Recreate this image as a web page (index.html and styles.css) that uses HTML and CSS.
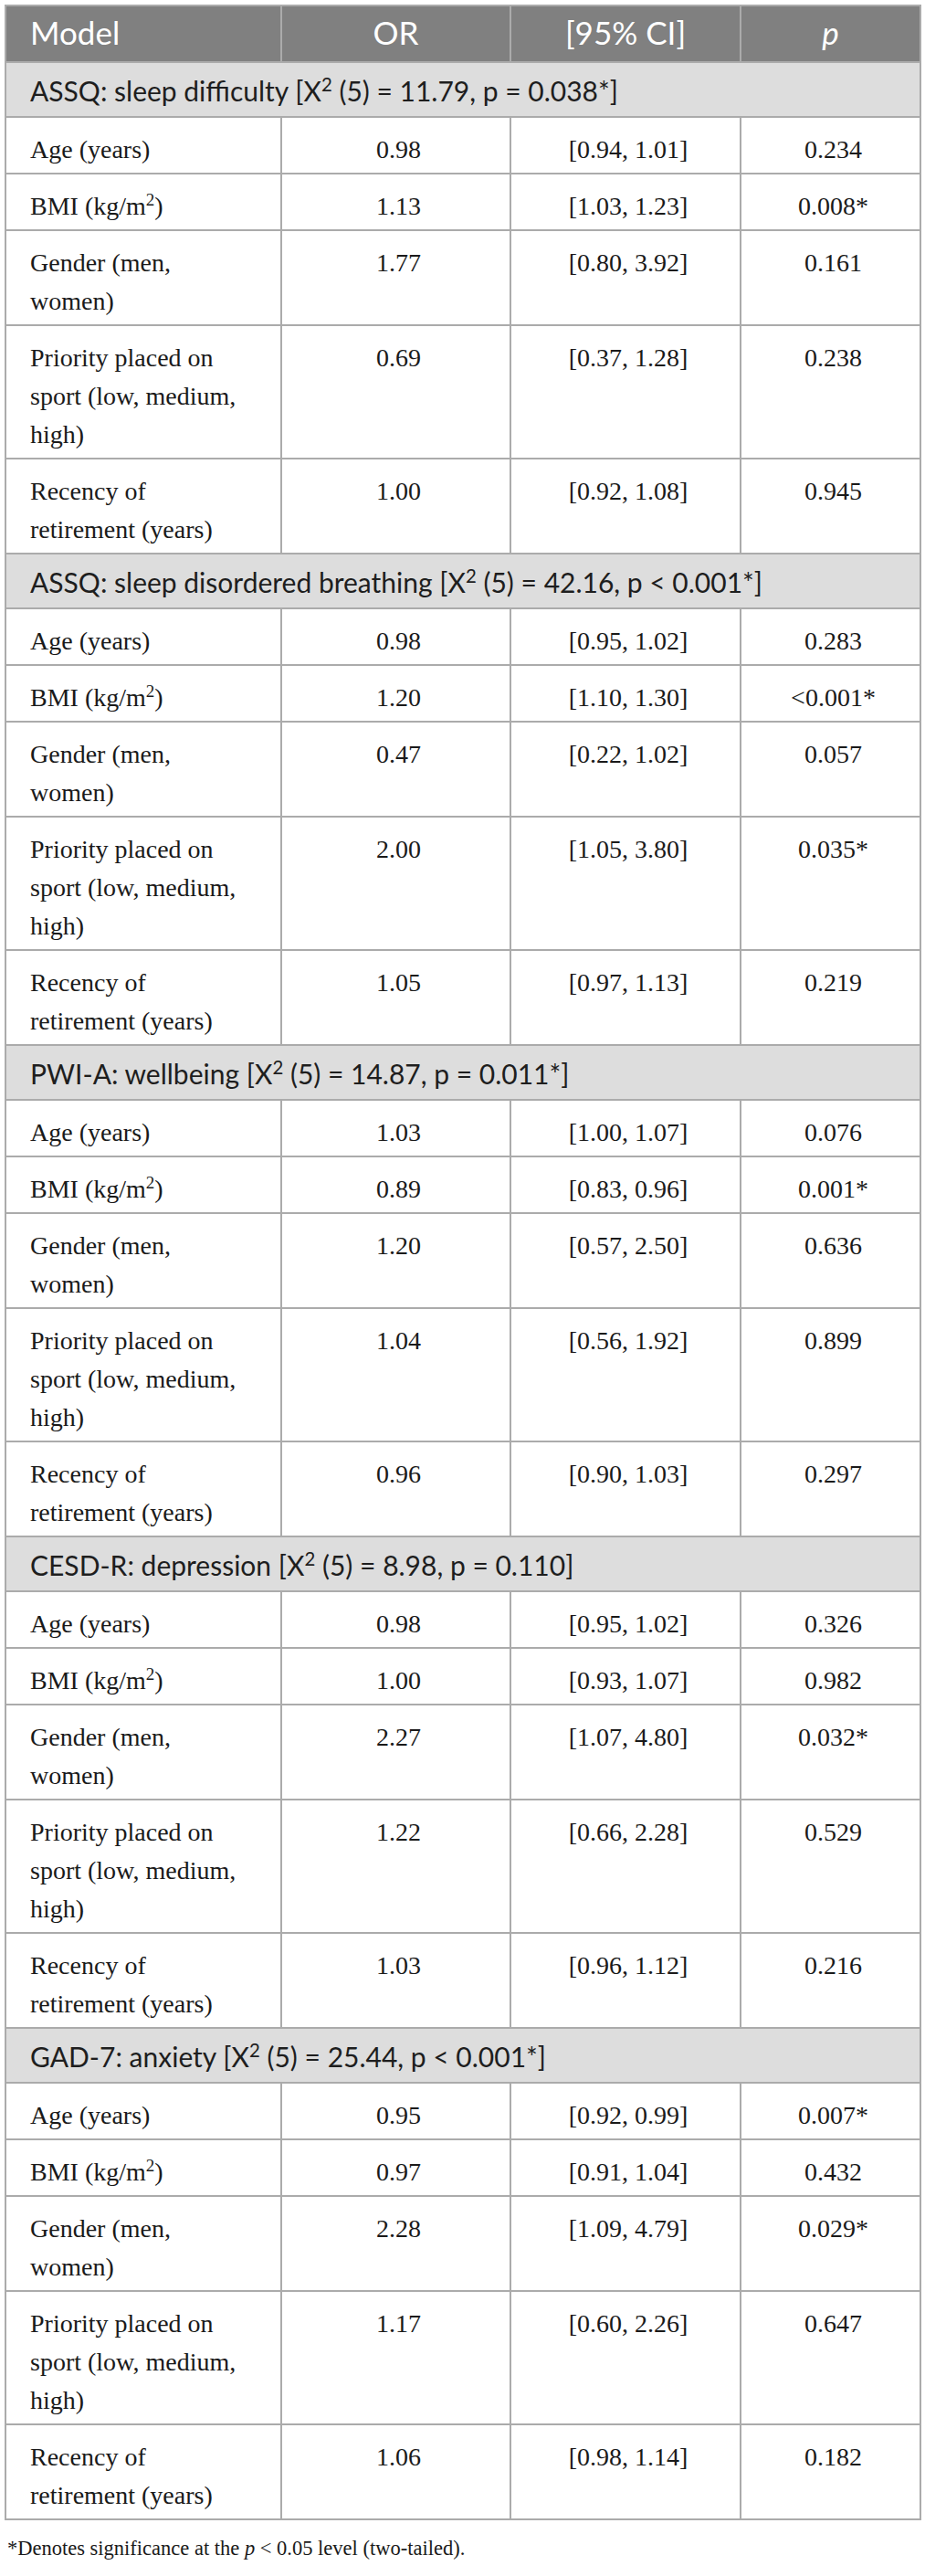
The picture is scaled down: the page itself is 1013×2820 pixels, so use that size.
FILE: index.html
```html
<!DOCTYPE html>
<html lang="en">
<head>
<meta charset="utf-8">
<title>Logistic regression models</title>
<link rel="stylesheet" href="styles.css">
</head>
<body>
<div class="wrap">
<table class="tbl">
<colgroup>
<col class="c1"><col class="c2"><col class="c3"><col class="c4">
</colgroup>
<thead>
<tr><th class="left">Model</th><th>OR</th><th>[95% CI]</th><th><i>p</i></th></tr>
</thead>
<tbody>
<tr class="sec"><td colspan="4">ASSQ: sleep difficulty [X<sup>2</sup> (5) = 11.79, p = 0.038*]</td></tr>
<tr><td>Age (years)</td><td>0.98</td><td>[0.94, 1.01]</td><td>0.234</td></tr>
<tr><td>BMI (kg/m<sup>2</sup>)</td><td>1.13</td><td>[1.03, 1.23]</td><td>0.008*</td></tr>
<tr><td>Gender (men, women)</td><td>1.77</td><td>[0.80, 3.92]</td><td>0.161</td></tr>
<tr><td>Priority placed on sport (low, medium, high)</td><td>0.69</td><td>[0.37, 1.28]</td><td>0.238</td></tr>
<tr><td>Recency of retirement (years)</td><td>1.00</td><td>[0.92, 1.08]</td><td>0.945</td></tr>

<tr class="sec"><td colspan="4">ASSQ: sleep disordered breathing [X<sup>2</sup> (5) = 42.16, p &lt; 0.001*]</td></tr>
<tr><td>Age (years)</td><td>0.98</td><td>[0.95, 1.02]</td><td>0.283</td></tr>
<tr><td>BMI (kg/m<sup>2</sup>)</td><td>1.20</td><td>[1.10, 1.30]</td><td>&lt;0.001*</td></tr>
<tr><td>Gender (men, women)</td><td>0.47</td><td>[0.22, 1.02]</td><td>0.057</td></tr>
<tr><td>Priority placed on sport (low, medium, high)</td><td>2.00</td><td>[1.05, 3.80]</td><td>0.035*</td></tr>
<tr><td>Recency of retirement (years)</td><td>1.05</td><td>[0.97, 1.13]</td><td>0.219</td></tr>

<tr class="sec"><td colspan="4">PWI-A: wellbeing [X<sup>2</sup> (5) = 14.87, p = 0.011*]</td></tr>
<tr><td>Age (years)</td><td>1.03</td><td>[1.00, 1.07]</td><td>0.076</td></tr>
<tr><td>BMI (kg/m<sup>2</sup>)</td><td>0.89</td><td>[0.83, 0.96]</td><td>0.001*</td></tr>
<tr><td>Gender (men, women)</td><td>1.20</td><td>[0.57, 2.50]</td><td>0.636</td></tr>
<tr><td>Priority placed on sport (low, medium, high)</td><td>1.04</td><td>[0.56, 1.92]</td><td>0.899</td></tr>
<tr><td>Recency of retirement (years)</td><td>0.96</td><td>[0.90, 1.03]</td><td>0.297</td></tr>

<tr class="sec"><td colspan="4">CESD-R: depression [X<sup>2</sup> (5) = 8.98, p = 0.110]</td></tr>
<tr><td>Age (years)</td><td>0.98</td><td>[0.95, 1.02]</td><td>0.326</td></tr>
<tr><td>BMI (kg/m<sup>2</sup>)</td><td>1.00</td><td>[0.93, 1.07]</td><td>0.982</td></tr>
<tr><td>Gender (men, women)</td><td>2.27</td><td>[1.07, 4.80]</td><td>0.032*</td></tr>
<tr><td>Priority placed on sport (low, medium, high)</td><td>1.22</td><td>[0.66, 2.28]</td><td>0.529</td></tr>
<tr><td>Recency of retirement (years)</td><td>1.03</td><td>[0.96, 1.12]</td><td>0.216</td></tr>

<tr class="sec"><td colspan="4">GAD-7: anxiety [X<sup>2</sup> (5) = 25.44, p &lt; 0.001*]</td></tr>
<tr><td>Age (years)</td><td>0.95</td><td>[0.92, 0.99]</td><td>0.007*</td></tr>
<tr><td>BMI (kg/m<sup>2</sup>)</td><td>0.97</td><td>[0.91, 1.04]</td><td>0.432</td></tr>
<tr><td>Gender (men, women)</td><td>2.28</td><td>[1.09, 4.79]</td><td>0.029*</td></tr>
<tr><td>Priority placed on sport (low, medium, high)</td><td>1.17</td><td>[0.60, 2.26]</td><td>0.647</td></tr>
<tr><td>Recency of retirement (years)</td><td>1.06</td><td>[0.98, 1.14]</td><td>0.182</td></tr>
</tbody>
</table>
<p class="note">*Denotes significance at the <i>p</i> &lt; 0.05 level (two-tailed).</p>
</div>
</body>
</html>
```

FILE: styles.css
```css
html, body {
  margin: 0;
  padding: 0;
  background: #ffffff;
}

.wrap {
  padding: 5px 6px 0 5px;
}

.tbl {
  width: 1002px;
  table-layout: fixed;
  border-collapse: collapse;
  border: 2px solid #ababab;
}

.c1 { width: 302px; }
.c2 { width: 251px; }
.c3 { width: 252px; }
.c4 { width: 197px; }

.tbl th,
.tbl td {
  border: 2px solid #ababab;
}

.tbl th {
  background: #808080;
  color: #ffffff;
  font-family: Lato, "Open Sans", sans-serif;
  font-weight: 400;
  font-size: 35px;
  line-height: 56px;
  padding: 0 26px 4px 26px;
  text-align: center;
}

.tbl th.left {
  text-align: left;
}

.tbl td {
  font-family: "Liberation Serif", "Times New Roman", serif;
  font-size: 28px;
  line-height: 42px;
  color: #1a1a1a;
  padding: 14px 20px 4px 26px;
  text-align: center;
  vertical-align: top;
}

.tbl td:first-child {
  text-align: left;
  padding-right: 40px;
}

.tbl tr.sec td {
  background: #dddddd;
  font-family: Lato, "Open Sans", sans-serif;
  font-size: 30px;
  line-height: 54px;
  padding: 3px 26px 1px 26px;
  text-align: left;
  color: #1e1e1e;
}

sup {
  font-size: 0.68em;
  line-height: 0;
  vertical-align: 0.55em;
}

.note {
  margin: 18px 0 0 3px;
  font-family: "Liberation Serif", "Times New Roman", serif;
  font-size: 22.5px;
  line-height: 25px;
  color: #1a1a1a;
}
```
